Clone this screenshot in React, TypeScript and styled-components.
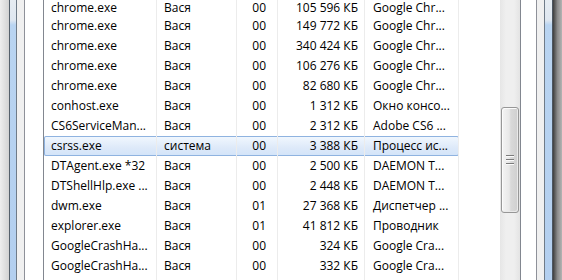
import React from 'react';
import styled, { createGlobalStyle } from 'styled-components';

const GlobalStyle = createGlobalStyle`
  html, body {
    margin: 0;
    padding: 0;
    overflow: hidden;
    background: #ffffff;
  }
  * { box-sizing: border-box; }
`;

const Desktop = styled.div`
  width: 562px;
  height: 280px;
  display: flex;
  padding: 0 9px;
  overflow: hidden;
  background:
    linear-gradient(to right, #eeeeee, #d2d2d2) left top / 9px 100% no-repeat,
    linear-gradient(to right, #3e3e3e, #8c8c8c 50%, #b4b4b4) right top / 9px 100% no-repeat;
`;

const WindowFrame = styled.div`
  flex: 1;
  display: flex;
  padding: 0 7px 0 6px;
  border-left: 1px solid #55606b;
  border-right: 1px solid #4c5661;
  background: linear-gradient(to bottom, #e6ecf2 0, #dfe7f0 20px, #b9d4f1 25px, #b3cfef 100%);
`;

const Dialog = styled.div`
  flex: 1;
  display: flex;
  padding: 0 7px;
  border-left: 1px solid #6f7b88;
  border-right: 1px solid #6f7b88;
  background: #f0f0f0;
`;

const TabPage = styled.div`
  flex: 1;
  display: flex;
  padding: 0 15px 0 18px;
  border-left: 1px solid #8e9199;
  border-right: 1px solid #8e9199;
  background: #ffffff;
`;

const ListView = styled.div`
  flex: 1;
  display: flex;
  border-left: 1px solid #828790;
  border-right: 1px solid #828790;
  background: #ffffff;
  overflow: hidden;
`;

const Rows = styled.div`
  flex: 1;
  display: flex;
  flex-direction: column;
  font-family: "Open Sans", "Noto Sans", sans-serif;
  font-size: 12px;
  color: #000000;
`;

// the list is scrolled a few pixels, so the first row shows only its lower part
const Row = styled.div<{ $selected?: boolean; $partial?: boolean }>`
  display: grid;
  grid-template-columns: 113px 80px 41px 87px 94px;
  width: 415px;
  height: ${({ $partial }) => ($partial ? 16 : 20)}px;
  line-height: ${({ $partial }) => ($partial ? 16 : 20)}px;
  flex: none;
  border-radius: 2px;
  box-shadow: ${({ $selected }) => ($selected ? 'inset 0 0 0 1px #8fb3e0' : 'none')};
  background: ${({ $selected }) =>
    $selected ? 'linear-gradient(to bottom, #f2f8fe, #dde9f9 60%, #d3e4f9)' : 'transparent'};
`;

const Cell = styled.div<{ $align?: 'left' | 'right'; $pad?: number }>`
  white-space: nowrap;
  overflow: hidden;
  text-align: ${({ $align }) => $align || 'left'};
  padding: ${({ $align, $pad }) => ($align === 'right' ? `0 ${$pad ?? 7}px 0 0` : `0 0 0 ${$pad ?? 7}px`)};
  border-right: 1px solid #ececec;
`;

const Filler = styled.div`
  flex: 1;
  display: grid;
  grid-template-columns: 113px 80px 41px 87px 94px;
  width: 415px;
`;

const FillerCell = styled.div`
  border-right: 1px solid #ececec;
`;

const Scrollbar = styled.div`
  width: 20px;
  flex: none;
  display: flex;
  flex-direction: column;
  align-items: center;
  background: linear-gradient(to right, #e6e6e6, #efefef 30%, #efefef 70%, #e4e4e4);
`;

const Thumb = styled.div<{ $offset: number; $size: number }>`
  margin-top: ${({ $offset }) => $offset}px;
  width: 18px;
  height: ${({ $size }) => $size}px;
  border: 1px solid #979797;
  border-radius: 3px;
  box-shadow: inset 1px 1px 0 #fbfbfb, inset -1px -1px 0 #e9e9e9;
  background: linear-gradient(to right, #f4f4f4, #e8e8e8 45%, #d9d9d9 55%, #cfcfcf);
  display: flex;
  flex-direction: column;
  align-items: center;
  justify-content: center;
  gap: 2px;
`;

const Grip = styled.div`
  width: 8px;
  height: 2px;
  border-top: 1px solid #7b7b7b;
  border-bottom: 1px solid #fbfbfb;
`;

type Proc = [string, string, string, string, string];

const processes: Proc[] = [
  ['chrome.exe', 'Вася', '00', '105 596 КБ', 'Google Chr...'],
  ['chrome.exe', 'Вася', '00', '149 772 КБ', 'Google Chr...'],
  ['chrome.exe', 'Вася', '00', '340 424 КБ', 'Google Chr...'],
  ['chrome.exe', 'Вася', '00', '106 276 КБ', 'Google Chr...'],
  ['chrome.exe', 'Вася', '00', '82 680 КБ', 'Google Chr...'],
  ['conhost.exe', 'Вася', '00', '1 312 КБ', 'Окно консо...'],
  ['CS6ServiceMan...', 'Вася', '00', '2 312 КБ', 'Adobe CS6 ...'],
  ['csrss.exe', 'система', '00', '3 388 КБ', 'Процесс ис...'],
  ['DTAgent.exe *32', 'Вася', '00', '2 500 КБ', 'DAEMON T...'],
  ['DTShellHlp.exe ...', 'Вася', '00', '2 448 КБ', 'DAEMON T...'],
  ['dwm.exe', 'Вася', '01', '27 368 КБ', 'Диспетчер ...'],
  ['explorer.exe', 'Вася', '01', '41 812 КБ', 'Проводник'],
  ['GoogleCrashHa...', 'Вася', '00', '324 КБ', 'Google Cra...'],
  ['GoogleCrashHa...', 'Вася', '00', '332 КБ', 'Google Cra...'],
];

const SELECTED = 7;

export default function App() {
  return (
    <>
      <GlobalStyle />
      <Desktop>
        <WindowFrame>
          <Dialog>
            <TabPage>
              <ListView>
                <Rows>
                  {processes.map((p, i) => (
                    <Row key={i} $selected={i === SELECTED} $partial={i === 0}>
                      <Cell $pad={7}>{p[0]}</Cell>
                      <Cell $pad={7}>{p[1]}</Cell>
                      <Cell $align="right" $pad={11}>{p[2]}</Cell>
                      <Cell $align="right" $pad={6}>{p[3]}</Cell>
                      <Cell $pad={8}>{p[4]}</Cell>
                    </Row>
                  ))}
                  <Filler>
                    <FillerCell />
                    <FillerCell />
                    <FillerCell />
                    <FillerCell />
                    <FillerCell />
                  </Filler>
                </Rows>
                <Scrollbar>
                  <Thumb $offset={107} $size={106}>
                    <Grip />
                    <Grip />
                    <Grip />
                  </Thumb>
                </Scrollbar>
              </ListView>
            </TabPage>
          </Dialog>
        </WindowFrame>
      </Desktop>
    </>
  );
}
